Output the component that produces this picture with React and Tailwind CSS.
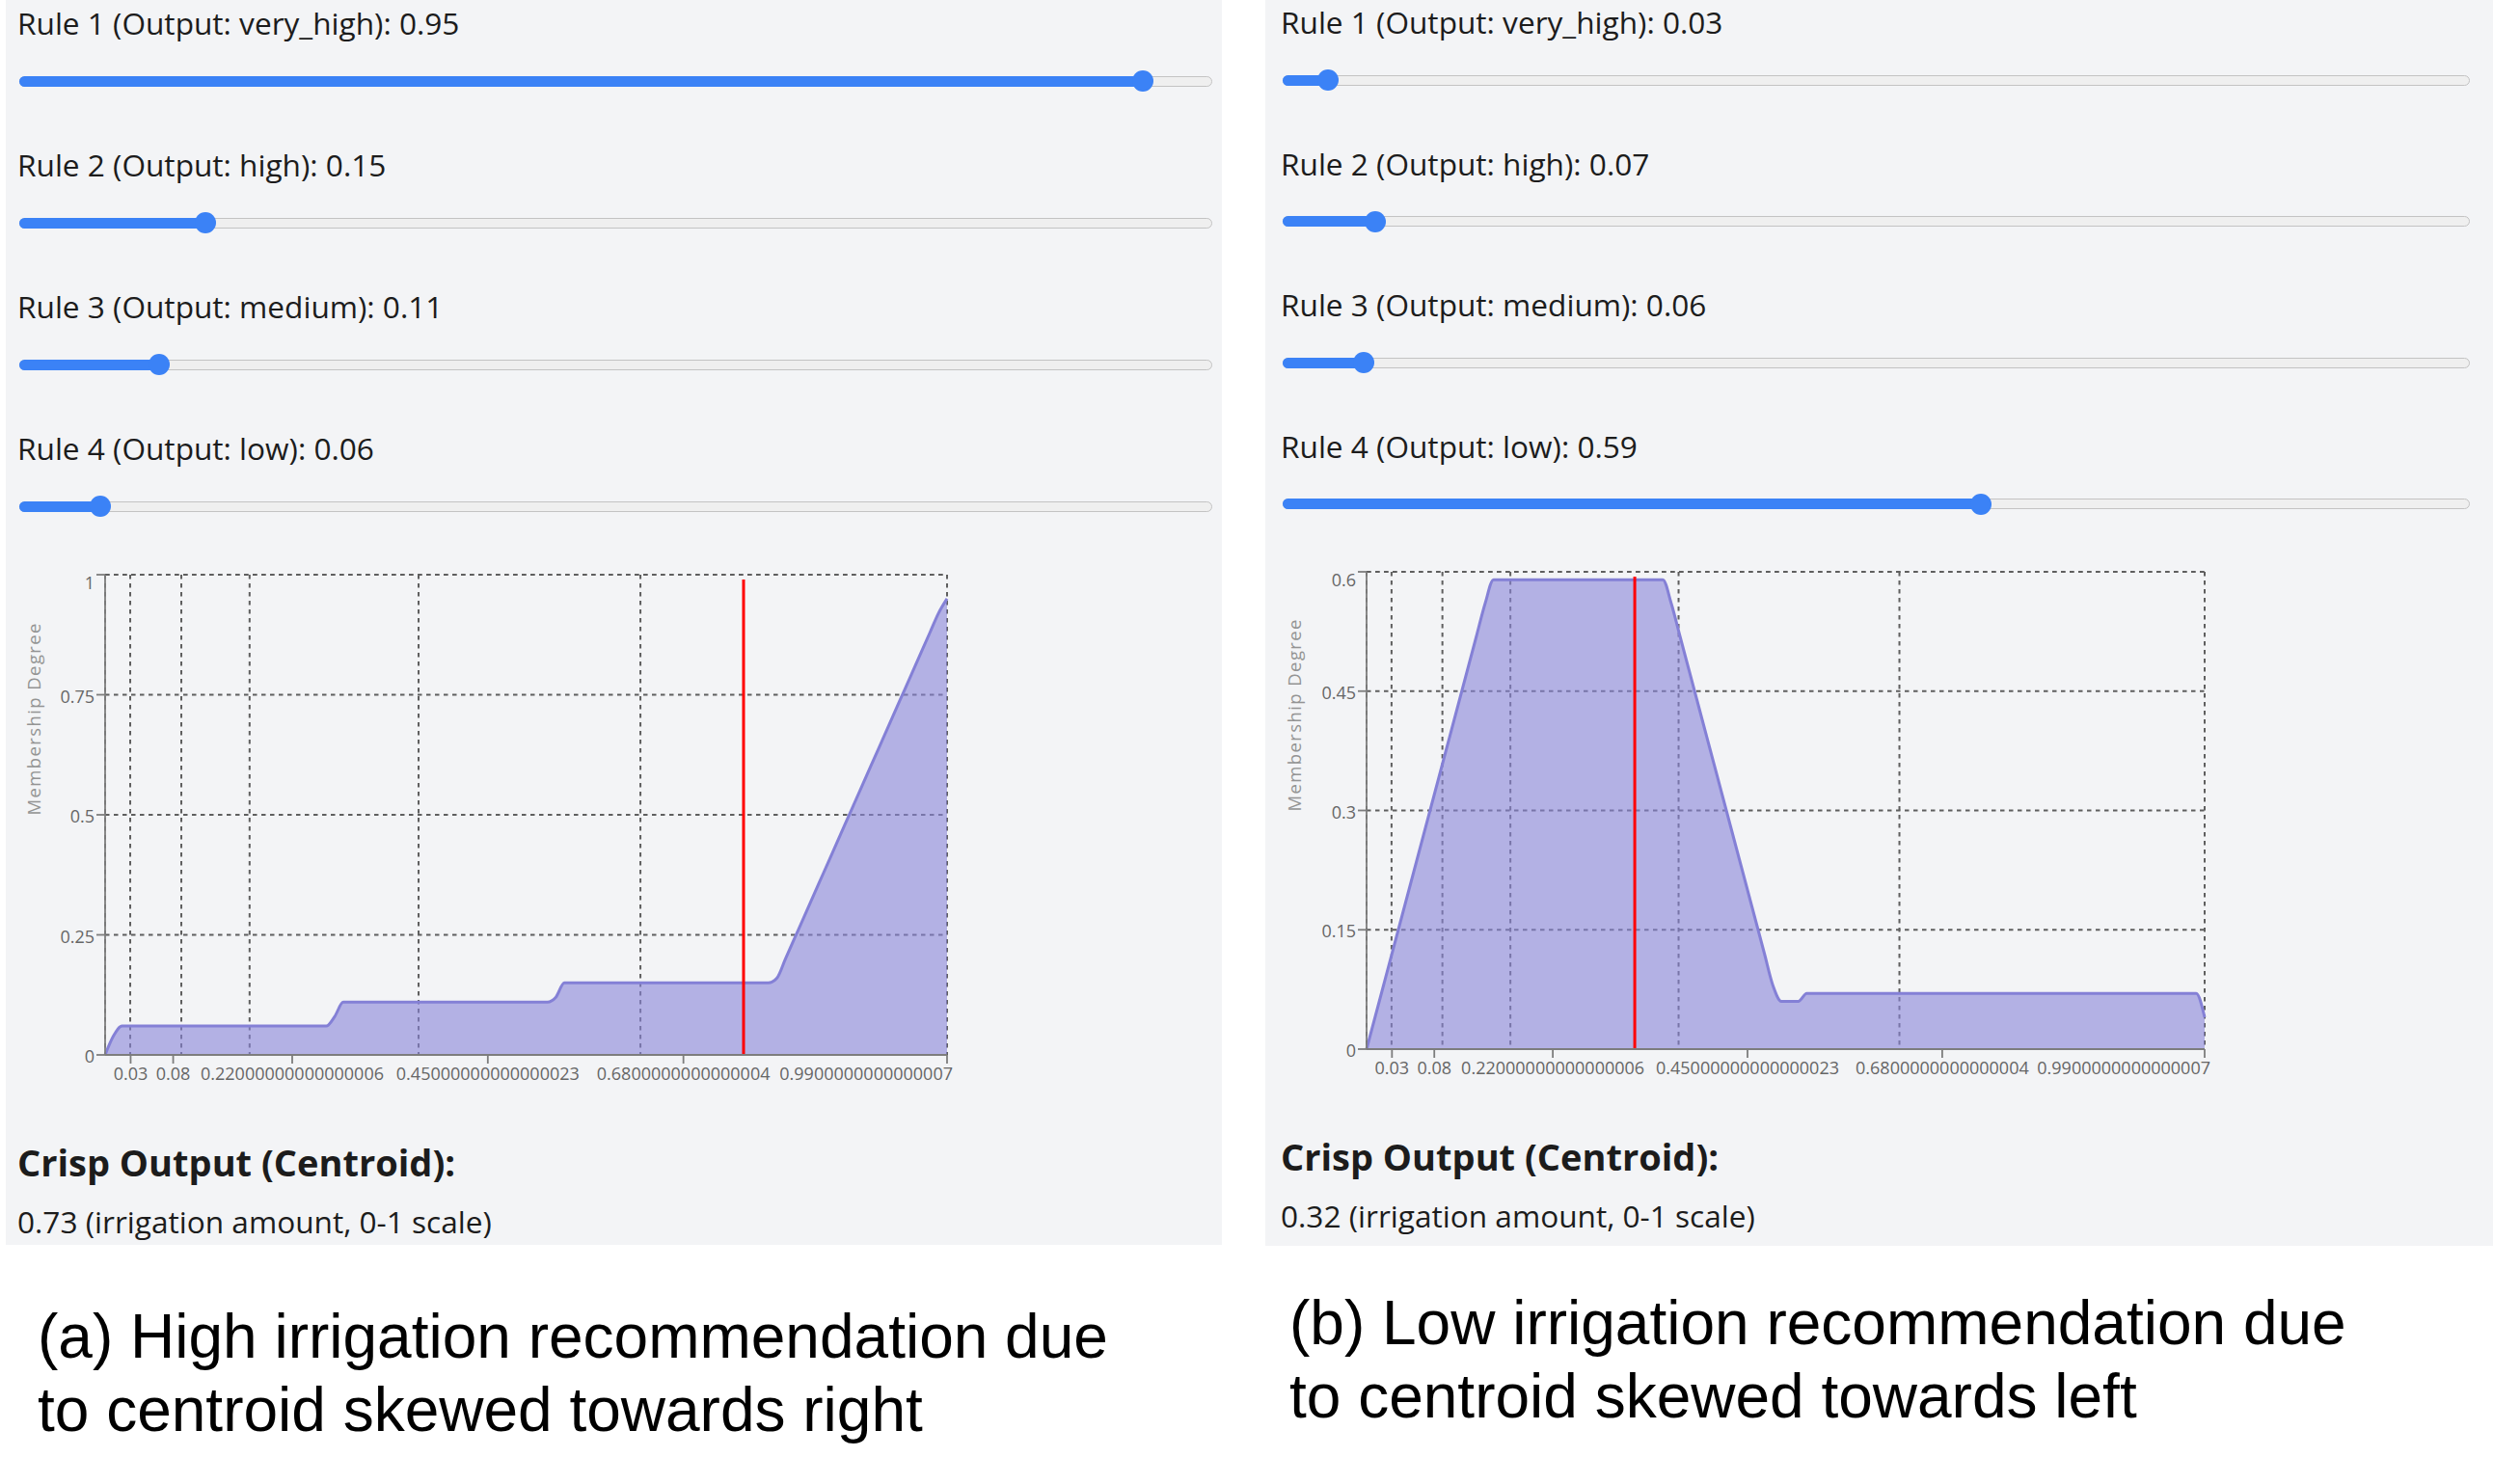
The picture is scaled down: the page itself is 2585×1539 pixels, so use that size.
import React from 'react'

// membership functions of the output variable (irrigation amount, 0-1)
const tri = (x, a, b, c) => Math.max(0, Math.min((x - a) / (b - a), (c - x) / (c - b)))
const MF = {
  low:       x => tri(x, 0, 0.25, 0.5),
  medium:    x => tri(x, 0.25, 0.5, 0.75),
  high:      x => tri(x, 0.5, 0.75, 1),
  very_high: x => tri(x, 0.75, 1, 1.25),
}

const X_LABELS = [
  [0.03, '0.03'],
  [0.08, '0.08'],
  [0.22, '0.22000000000000006'],
  [0.45, '0.45000000000000023'],
  [0.68, '0.6800000000000004'],
  [0.99, '0.9900000000000007'],
]
const GRID_X = [0, 0.0298, 0.0905, 0.1716, 0.3723, 0.6358, 1]

const PANELS = [
  {
    id: 'a',
    rules: [['very_high', 0.95], ['high', 0.15], ['medium', 0.11], ['low', 0.06]],
    crisp: '0.73',
    chart: { x0: 91, w: 873, top: 4, bottom: 502, yMax: 1, yTicks: [0, 0.25, 0.5, 0.75, 1], red: 0.7583, lx: 16, ly: 154 },
    caption: ['(a) High irrigation recommendation due', 'to centroid skewed towards right'],
    panelCls: 'w-[1261px] ml-[6px] pl-[12px] pr-[10px] pt-[4px] pb-[6px]',
    ruleCls: 'h-[147px]',
    captionCls: 'mt-[57px] pl-[39px]',
  },
  {
    id: 'b',
    rules: [['very_high', 0.03], ['high', 0.07], ['medium', 0.06], ['low', 0.59]],
    crisp: '0.32',
    chart: { x0: 89, w: 869, top: 4, bottom: 499, yMax: 0.6, yTicks: [0, 0.15, 0.3, 0.45, 0.6], red: 0.32, lx: 13, ly: 153 },
    caption: ['(b) Low irrigation recommendation due', 'to centroid skewed towards left'],
    panelCls: 'w-[1273px] pl-[16px] pr-[24px] pt-[3px] pb-[13px]',
    ruleCls: 'h-[146.5px]',
    captionCls: 'mt-[42px] pl-[25px]',
  },
]

function aggregate(rules) {
  const pts = []
  for (let i = 0; i < 100; i++) {
    const x = i / 100
    let y = 0
    rules.forEach(([name, w]) => { y = Math.max(y, Math.min(MF[name](x), w)) })
    pts.push([x, y])
  }
  return pts
}

// same shape as d3 curveMonotoneX (what recharts uses for type="monotone")
function monotonePath(p) {
  const n = p.length
  const sgn = v => (v < 0 ? -1 : 1)
  const t = new Array(n).fill(0)
  for (let i = 1; i < n - 1; i++) {
    const h0 = p[i][0] - p[i - 1][0], h1 = p[i + 1][0] - p[i][0]
    const s0 = (p[i][1] - p[i - 1][1]) / h0, s1 = (p[i + 1][1] - p[i][1]) / h1
    const q = (s0 * h1 + s1 * h0) / (h0 + h1)
    t[i] = (sgn(s0) + sgn(s1)) * Math.min(Math.abs(s0), Math.abs(s1), 0.5 * Math.abs(q)) || 0
  }
  t[0] = (3 * (p[1][1] - p[0][1]) / (p[1][0] - p[0][0]) - t[1]) / 2
  t[n - 1] = (3 * (p[n - 1][1] - p[n - 2][1]) / (p[n - 1][0] - p[n - 2][0]) - t[n - 2]) / 2
  let d = `M${p[0][0]},${p[0][1]}`
  for (let i = 0; i < n - 1; i++) {
    const dx = (p[i + 1][0] - p[i][0]) / 3
    d += ` C${p[i][0] + dx},${p[i][1] + dx * t[i]} ${p[i + 1][0] - dx},${p[i + 1][1] - dx * t[i + 1]} ${p[i + 1][0]},${p[i + 1][1]}`
  }
  return d
}

function Slider({ value }) {
  return (
    <div className="relative ml-[2px] mt-[29px] flex h-[22px] items-center">
      <div className="h-[11px] w-full rounded-full border border-[#c3c3c3] bg-[#efefef]" />
      <div
        className="absolute left-0 h-[11px] rounded-full bg-[#3b82f6]"
        style={{ width: `calc(11px + ${value} * (100% - 22px))` }}
      />
      <div
        className="absolute top-0 h-[22px] w-[22px] rounded-full bg-[#3b82f6]"
        style={{ left: `calc(${value} * (100% - 22px))` }}
      />
    </div>
  )
}

function Chart({ rules, cfg }) {
  const { x0, w, top, bottom, yMax, yTicks, red, lx, ly } = cfg
  const right = x0 + w
  const sx = x => x0 + (x / 0.99) * w
  const sy = y => bottom - (y / yMax) * (bottom - top)
  const pts = aggregate(rules).map(([x, y]) => [sx(x), sy(y)])
  const line = monotonePath(pts)
  const area = `${line} L${right},${bottom} L${x0},${bottom} Z`
  const redX = x0 + red * w

  return (
    <svg width="1000" height={bottom + 36} className="block font-['Open_Sans','Noto_Sans',sans-serif]">
      {/* grid */}
      <g stroke="#5f5f5f" strokeWidth="2" strokeDasharray="4.5 4.5">
        {GRID_X.map(f => (
          <line key={f} x1={x0 + f * w} y1={top} x2={x0 + f * w} y2={bottom} />
        ))}
        {yTicks.map(v => (
          <line key={v} x1={x0} y1={sy(v)} x2={right} y2={sy(v)} />
        ))}
        <line x1={x0} y1={top} x2={right} y2={top} />
      </g>

      <path d={area} fill="#8884d8" fillOpacity="0.6" />
      <path d={line} fill="none" stroke="#8480d6" strokeWidth="3" />

      <line x1={redX} y1={top + 5} x2={redX} y2={bottom} stroke="#ff0000" strokeWidth="3" />

      {/* axes */}
      <g stroke="#7d7d7d" strokeWidth="1.8">
        <line x1={x0} y1={top} x2={x0} y2={bottom} />
        <line x1={x0} y1={bottom} x2={right} y2={bottom} />
        {yTicks.map(v => (
          <line key={v} x1={x0 - 9} y1={sy(v)} x2={x0} y2={sy(v)} />
        ))}
        {X_LABELS.map(([v]) => (
          <line key={v} x1={sx(v)} y1={bottom} x2={sx(v)} y2={bottom + 9} />
        ))}
      </g>

      <g fill="#666" fontSize="18">
        {yTicks.map((v, i) => (
          <text
            key={v}
            x={x0 - 11}
            y={i === yTicks.length - 1 ? sy(v) + 8 : sy(v) + 1}
            textAnchor="end"
            dominantBaseline="central"
          >
            {String(v)}
          </text>
        ))}
        {X_LABELS.map(([v, label], i) => (
          <text
            key={v}
            x={i === X_LABELS.length - 1 ? right + 6 : sx(v)}
            y={bottom + 26}
            textAnchor={i === X_LABELS.length - 1 ? 'end' : 'middle'}
          >
            {label}
          </text>
        ))}
      </g>

      <text
        x={lx}
        y={ly}
        transform={`rotate(-90 ${lx} ${ly})`}
        textAnchor="middle"
        dominantBaseline="central"
        fill="#949494"
        fontSize="18.5"
        textLength="199"
        lengthAdjust="spacing"
      >
        Membership Degree
      </text>
    </svg>
  )
}

function Panel({ p }) {
  return (
    <div className="flex flex-col">
      <div className={`bg-[#f3f4f6] text-[#1c1c1c] ${p.panelCls}`}>
        {p.rules.map(([name, w], i) => (
          <div key={name} className={p.ruleCls}>
            <div className="h-[40px] text-[31.6px] leading-[40px] whitespace-nowrap">
              Rule {i + 1} (Output: {name}): {w.toFixed(2)}
            </div>
            <Slider value={w} />
          </div>
        ))}

        <Chart rules={p.rules} cfg={p.chart} />

        <div className="mt-[53px] h-[44px] text-[38px] font-bold leading-[44px] whitespace-nowrap">
          Crisp Output (Centroid):
        </div>
        <div className="mt-[22px] h-[36px] text-[31.6px] leading-[36px] whitespace-nowrap">
          {p.crisp} (irrigation amount, 0-1 scale)
        </div>
      </div>

      <div className={`font-['Liberation_Sans',Arial,sans-serif] text-[64px] leading-[76px] text-black ${p.captionCls}`}>
        <div>{p.caption[0]}</div>
        <div>{p.caption[1]}</div>
      </div>
    </div>
  )
}

export default function App() {
  return (
    <div className="flex min-h-screen w-[2585px] gap-[45px] overflow-hidden bg-white font-['Open_Sans','Noto_Sans',sans-serif]">
      {PANELS.map(p => <Panel key={p.id} p={p} />)}
    </div>
  )
}
